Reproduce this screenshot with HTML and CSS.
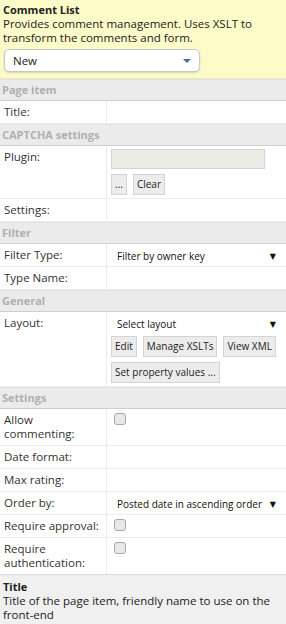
FILE: index.html
```html
<!DOCTYPE html>
<html lang="en">
<head>
    <meta charset="UTF-8">
    <title>Comment List</title>
    <link rel="stylesheet" href="styles.css">
</head>
<body>

    <!-- Item summary -->
    <div class="summary">
        <div class="summary-title">Comment List</div>
        <div class="summary-text">Provides comment management. Uses XSLT to transform the comments and form.</div>
        <div class="version-select">
            <span>New</span>
            <span class="caret"></span>
        </div>
    </div>

    <!-- Property grid -->
    <div class="grid">
        <div class="group">Page item</div>
        <div class="row">
            <div class="label">Title:</div>
            <div class="value"></div>
        </div>

        <div class="group">CAPTCHA settings</div>
        <div class="row">
            <div class="label">Plugin:</div>
            <div class="value">
                <div class="text-box"></div>
                <div class="buttons">
                    <span class="btn">...</span>
                    <span class="btn">Clear</span>
                </div>
            </div>
        </div>
        <div class="row">
            <div class="label">Settings:</div>
            <div class="value"></div>
        </div>

        <div class="group">Filter</div>
        <div class="row">
            <div class="label">Filter Type:</div>
            <div class="value"><div class="dropdown">Filter by owner key <span class="arrow">&#9660;</span></div></div>
        </div>
        <div class="row">
            <div class="label">Type Name:</div>
            <div class="value"></div>
        </div>

        <div class="group">General</div>
        <div class="row">
            <div class="label">Layout:</div>
            <div class="value">
                <div class="dropdown">Select layout <span class="arrow">&#9660;</span></div>
                <div class="buttons">
                    <span class="btn">Edit</span>
                    <span class="btn">Manage XSLTs</span>
                    <span class="btn">View XML</span>
                </div>
                <div class="buttons">
                    <span class="btn">Set property values ...</span>
                </div>
            </div>
        </div>

        <div class="group">Settings</div>
        <div class="row">
            <div class="label">Allow commenting:</div>
            <div class="value"><span class="check"></span></div>
        </div>
        <div class="row">
            <div class="label">Date format:</div>
            <div class="value"></div>
        </div>
        <div class="row">
            <div class="label">Max rating:</div>
            <div class="value"></div>
        </div>
        <div class="row">
            <div class="label">Order by:</div>
            <div class="value"><div class="dropdown">Posted date in ascending order <span class="arrow">&#9660;</span></div></div>
        </div>
        <div class="row">
            <div class="label">Require approval:</div>
            <div class="value"><span class="check"></span></div>
        </div>
        <div class="row">
            <div class="label">Require authentication:</div>
            <div class="value"><span class="check"></span></div>
        </div>
    </div>

    <!-- Help text -->
    <div class="help">
        <div class="help-title">Title</div>
        <div class="help-text">Title of the page item, friendly name to use on the front-end</div>
    </div>

</body>
</html>
```

FILE: styles.css
```css
body {
    font-family: 'Open Sans', 'DejaVu Sans', sans-serif;
    font-size: 11.5px;
    color: #222;
    margin: 0;
    padding: 0;
    background-color: #ffffff;
}

/* Summary box */
.summary {
    background-color: #fdfbc8;
    padding: 3px 4px 6px 3px;
    border-bottom: 1px solid #ebe9bf;
}

.summary-title {
    font-weight: bold;
    font-size: 11px;
    line-height: 14px;
}

.summary-text {
    line-height: 14px;
}

.version-select {
    box-sizing: border-box;
    display: flex;
    justify-content: space-between;
    align-items: center;
    width: 196px;
    height: 23px;
    margin: 4px 0 0 1px;
    padding: 0 8px 0 8px;
    background-color: #ffffff;
    border: 1px solid #c8c8c8;
    border-radius: 5px;
    box-shadow: 0 1px 2px rgba(0, 0, 0, 0.15);
}

.caret {
    width: 0;
    height: 0;
    border-left: 4px solid transparent;
    border-right: 4px solid transparent;
    border-top: 4px solid #4a6a9a;
}

/* Grid */
.group {
    background-color: #ebebeb;
    color: #b0b0b0;
    font-weight: bold;
    font-size: 11px;
    height: 20px;
    line-height: 20px;
    padding-left: 2px;
    border-top: 1px solid #e2e2e2;
    border-bottom: 1px solid #cfcfcf;
}

.row {
    display: grid;
    grid-template-columns: 107px 1fr;
    border-bottom: 1px solid #ececec;
}

.row:last-child {
    border-bottom: none;
}

.label {
    padding: 4px 6px 4px 4px;
    line-height: 14px;
    border-right: 1px solid #ececec;
    color: #333;
}

.value {
    padding: 2px 10px 3px 4px;
    font-size: 10px;
    line-height: 14px;
}

.dropdown {
    display: flex;
    justify-content: space-between;
    align-items: center;
    padding: 3px 0 0 6px;
    color: #111;
}

.arrow {
    font-size: 8px;
    color: #111;
}

.text-box {
    height: 18px;
    width: 152px;
    margin-top: 1px;
    background-color: #ebebe6;
    border: 1px solid #d4d4d0;
}

.buttons {
    display: flex;
    gap: 6px;
    margin-top: 5px;
    white-space: nowrap;
}

.btn {
    display: inline-block;
    background-color: #ececec;
    border: 1px solid #d4d4d4;
    padding: 2px 3px;
    line-height: 15px;
    font-size: 10px;
    color: #222;
}

.check {
    display: inline-block;
    width: 10px;
    height: 10px;
    margin: 2px 0 0 3px;
    border: 1px solid #a8a8a8;
    border-radius: 3px;
    background-color: #e8e8e8;
}

/* Help */
.help {
    background-color: #f0f0f0;
    border-top: 1px solid #dcdcdc;
    padding: 5px 3px 8px 3px;
    line-height: 14px;
}

.help-title {
    font-weight: bold;
    font-size: 11px;
}
```
